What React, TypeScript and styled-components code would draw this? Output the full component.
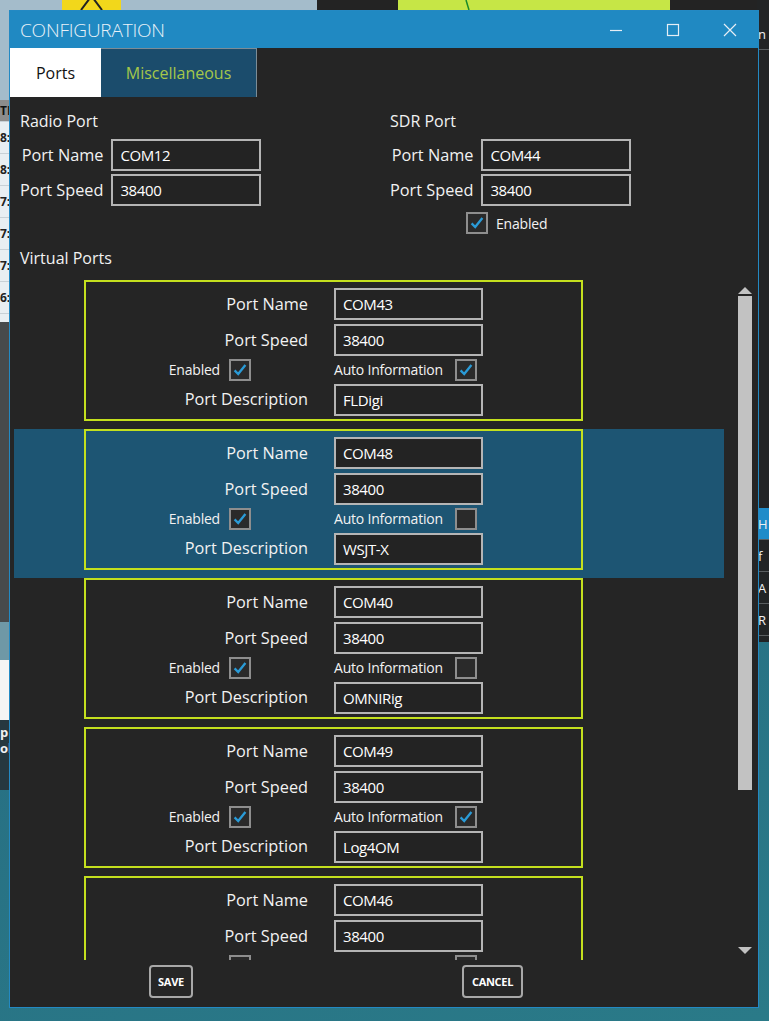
import styled, { createGlobalStyle } from "styled-components";

type VirtualPort = {
  name: string;
  speed: string;
  enabled: boolean;
  autoInfo: boolean;
  description: string;
};

const virtualPorts: VirtualPort[] = [
  { name: "COM43", speed: "38400", enabled: true, autoInfo: true, description: "FLDigi" },
  { name: "COM48", speed: "38400", enabled: true, autoInfo: false, description: "WSJT-X" },
  { name: "COM40", speed: "38400", enabled: true, autoInfo: false, description: "OMNIRig" },
  { name: "COM49", speed: "38400", enabled: true, autoInfo: true, description: "Log4OM" },
  { name: "COM46", speed: "38400", enabled: true, autoInfo: false, description: "" },
];

const GlobalStyle = createGlobalStyle`
  html, body {
    margin: 0;
    padding: 0;
    background: #1d6479;
  }
  * {
    box-sizing: border-box;
  }
`;

const Check = ({ checked }: { checked: boolean }) => (
  <CheckBox>
    {checked && (
      <svg width="20" height="20" viewBox="0 0 20 20">
        <path d="M4 10.5 L8 14.5 L16 4.5" fill="none" stroke="#2a9bd7" strokeWidth="2.6" />
      </svg>
    )}
  </CheckBox>
);

const PortCard = ({ port }: { port: VirtualPort }) => (
  <Card>
    <Label>Port Name</Label>
    <TextBox>{port.name}</TextBox>
    <Label>Port Speed</Label>
    <TextBox>{port.speed}</TextBox>
    <EnabledCell>
      <SmallText>Enabled</SmallText>
      <Check checked={port.enabled} />
    </EnabledCell>
    <AutoCell>
      <SmallText>Auto Information</SmallText>
      <Check checked={port.autoInfo} />
    </AutoCell>
    <Label>Port Description</Label>
    <TextBox>{port.description}</TextBox>
  </Card>
);

export default function App() {
  return (
    <Desktop>
      <GlobalStyle />
      <TopLeftApp>
        <WarnTile>
          <svg width="59" height="10" viewBox="0 0 59 10">
            <path d="M19 10 L29.5 -4 L40 10" fill="none" stroke="#222" strokeWidth="2" />
          </svg>
        </WarnTile>
      </TopLeftApp>
      <TopDarkApp>
        <TopChart>
          <svg width="272" height="10" viewBox="0 0 272 10">
            <path d="M68 0 L71 10" stroke="#1a8a2a" strokeWidth="1.5" />
          </svg>
        </TopChart>
      </TopDarkApp>
      <LeftApp>
        <LeftList>
          <span>TI</span>
          <span>8:</span>
          <span>8:</span>
          <span>7:</span>
          <span>7:</span>
          <span>7:</span>
          <span>6:</span>
        </LeftList>
        <LeftDark />
        <LeftLight />
        <LeftLogo />
        <LeftText>
          <span>p</span>
          <span>ol</span>
        </LeftText>
      </LeftApp>
      <RightApp>
        <RightCell>n</RightCell>
        <RightGap />
        <RightBlue>H</RightBlue>
        <RightCell>f</RightCell>
        <RightCell>A</RightCell>
        <RightCell>R</RightCell>
      </RightApp>

      <Window>
        <TitleBar>
          <Title>CONFIGURATION</Title>
          <Controls>
            <ControlButton>
              <svg width="14" height="14" viewBox="0 0 14 14">
                <path d="M1 7.5 H13" stroke="#e6eef5" strokeWidth="1.2" />
              </svg>
            </ControlButton>
            <ControlButton>
              <svg width="14" height="14" viewBox="0 0 14 14">
                <rect x="1.5" y="1.5" width="11" height="11" fill="none" stroke="#e6eef5" strokeWidth="1.2" />
              </svg>
            </ControlButton>
            <ControlButton>
              <svg width="14" height="14" viewBox="0 0 14 14">
                <path d="M1 1 L13 13 M13 1 L1 13" stroke="#e6eef5" strokeWidth="1.2" />
              </svg>
            </ControlButton>
          </Controls>
        </TitleBar>

        <TabStrip>
          <Tab $active>Ports</Tab>
          <Tab>Miscellaneous</Tab>
        </TabStrip>

        <Body>
          <TopPorts>
            <PortSection>
              <Heading>Radio Port</Heading>
              <PortForm>
                <Label>Port Name</Label>
                <TextBox>COM12</TextBox>
                <Label>Port Speed</Label>
                <TextBox>38400</TextBox>
              </PortForm>
            </PortSection>
            <PortSection>
              <Heading>SDR Port</Heading>
              <PortForm>
                <Label>Port Name</Label>
                <TextBox>COM44</TextBox>
                <Label>Port Speed</Label>
                <TextBox>38400</TextBox>
              </PortForm>
              <SdrEnabled>
                <Check checked />
                <SmallText>Enabled</SmallText>
              </SdrEnabled>
            </PortSection>
          </TopPorts>

          <VirtualHeading>Virtual Ports</VirtualHeading>

          <ListArea>
            <List>
              {virtualPorts.map((p, i) => (
                <Row key={p.name} $selected={i === 1}>
                  <PortCard port={p} />
                </Row>
              ))}
            </List>
            <ScrollBar>
              <ArrowUp />
              <Thumb />
              <ArrowDown />
            </ScrollBar>
          </ListArea>

          <Footer>
            <FooterButton>SAVE</FooterButton>
            <FooterButton $cancel>CANCEL</FooterButton>
          </Footer>
        </Body>
      </Window>
    </Desktop>
  );
}

const font = `"Open Sans", "Noto Sans", "DejaVu Sans", sans-serif`;

const Desktop = styled.div`
  position: relative;
  width: 769px;
  height: 1021px;
  overflow: hidden;
  background: linear-gradient(160deg, #1e5f77 0%, #276f83 50%, #2a7a88 100%);
  font-family: ${font};
`;

const TopLeftApp = styled.div`
  position: absolute;
  left: 0;
  top: 0;
  width: 317px;
  height: 20px;
  background: #a4bccb;
`;

const WarnTile = styled.div`
  position: absolute;
  left: 62px;
  top: 0;
  width: 59px;
  height: 10px;
  background: #f2d71b;
  svg {
    display: block;
  }
`;

const TopDarkApp = styled.div`
  position: absolute;
  left: 317px;
  top: 0;
  right: 0;
  height: 20px;
  background: #232323;
`;

const TopChart = styled.div`
  position: absolute;
  left: 81px;
  top: 0;
  width: 272px;
  height: 20px;
  background: #c6e646;
  svg {
    display: block;
  }
`;

const LeftApp = styled.div`
  position: absolute;
  left: 0;
  top: 0;
  width: 12px;
  height: 790px;
  display: flex;
  flex-direction: column;
  padding-top: 100px;
  background: #a4bccb;
`;

const LeftList = styled.div`
  display: flex;
  flex-direction: column;
  height: 222px;
  background: #e8eef2;
  color: #222;
  font: bold 12px ${font};
  span {
    height: 32px;
    line-height: 32px;
    border-bottom: 1px solid #c7d0d6;
  }
  span:first-child {
    height: 22px;
    line-height: 22px;
    background: #8c8c8c;
    color: #111;
  }
`;

const LeftDark = styled.div`
  height: 300px;
  background: #474a4c;
`;

const LeftLight = styled.div`
  height: 38px;
  background: #6f98a6;
`;

const LeftLogo = styled.div`
  height: 60px;
  background: #f4f4f4;
  border-right: 2px solid #111;
`;

const LeftText = styled.div`
  display: flex;
  flex-direction: column;
  height: 70px;
  background: #26383f;
  color: #f0f0f0;
  font: bold 13px ${font};
  line-height: 16px;
  padding-top: 4px;
`;

const RightApp = styled.div`
  position: absolute;
  right: 0;
  top: 0;
  width: 12px;
  height: 642px;
  display: flex;
  flex-direction: column;
  padding-top: 18px;
  background: #222425;
  color: #f0f0f0;
  font: 13px ${font};
`;

const RightCell = styled.div`
  height: 32px;
  line-height: 32px;
  padding-left: 1px;
  border-bottom: 1px solid #5a5e60;
  white-space: nowrap;
  overflow: hidden;
`;

const RightGap = styled.div`
  height: 458px;
  border-left: 1px solid #2a8cc4;
`;

const RightBlue = styled(RightCell)`
  background: #1f8cc9;
`;

const Window = styled.div`
  position: absolute;
  left: 9px;
  top: 10px;
  width: 750px;
  height: 998px;
  border: 1px solid #2389c3;
  background: #252525;
  display: flex;
  flex-direction: column;
`;

const TitleBar = styled.div`
  height: 37px;
  display: flex;
  align-items: center;
  background: #2089c2;
  padding-left: 10px;
`;

const Title = styled.div`
  flex: 1;
  color: #e9f1f8;
  font: 300 19px ${font};
  letter-spacing: -0.2px;
`;

const Controls = styled.div`
  display: flex;
  height: 100%;
`;

const ControlButton = styled.div`
  width: 57px;
  height: 100%;
  display: flex;
  align-items: center;
  justify-content: center;
`;

const TabStrip = styled.div`
  height: 50px;
  display: flex;
  background: #252525;
`;

const Tab = styled.div<{ $active?: boolean }>`
  display: flex;
  align-items: center;
  justify-content: center;
  font: 16px ${font};
  width: ${(p) => (p.$active ? "91px" : "156px")};
  background: ${(p) => (p.$active ? "#ffffff" : "#1b4c6c")};
  color: ${(p) => (p.$active ? "#111111" : "#a5c74a")};
  border-top: ${(p) => (p.$active ? "none" : "1px solid #7c8c96")};
  border-right: ${(p) => (p.$active ? "none" : "1px solid #7c8c96")};
  margin-bottom: 1px;
`;

const Body = styled.div`
  flex: 1;
  display: flex;
  flex-direction: column;
  color: #f2f2f2;
`;

const TopPorts = styled.div`
  display: grid;
  grid-template-columns: 370px 1fr;
  padding-left: 10px;
`;

const PortSection = styled.div`
  display: flex;
  flex-direction: column;
`;

const Heading = styled.div`
  margin-top: 12px;
  height: 20px;
  line-height: 20px;
  font: 16px ${font};
`;

const PortForm = styled.div`
  display: grid;
  grid-template-columns: auto 150px;
  grid-auto-rows: 32px;
  column-gap: 8px;
  row-gap: 3px;
  margin-top: 9px;
  width: max-content;
`;

const Label = styled.div`
  display: flex;
  align-items: center;
  justify-content: flex-end;
  font: 16.3px ${font};
  white-space: nowrap;
`;

const TextBox = styled.div`
  display: flex;
  align-items: center;
  height: 32px;
  padding-left: 7px;
  border: 2px solid #b5b5b5;
  background: #232323;
  color: #ffffff;
  font: 15px ${font};
  letter-spacing: -0.4px;
`;

const SdrEnabled = styled.div`
  display: flex;
  align-items: center;
  gap: 8px;
  margin-top: 6px;
  margin-left: 76px;
  height: 22px;
`;

const CheckBox = styled.span`
  display: inline-flex;
  align-items: center;
  justify-content: center;
  width: 22px;
  height: 22px;
  flex: none;
  border: 2px solid #8e8e8e;
  background: #2a2a2a;
`;

const SmallText = styled.span`
  font: 14px ${font};
  letter-spacing: -0.2px;
  white-space: nowrap;
`;

const VirtualHeading = styled(Heading)`
  margin-top: 13px;
  padding-left: 10px;
`;

const ListArea = styled.div`
  display: flex;
  height: 688px;
  margin-top: 5px;
  padding-left: 4px;
`;

const List = styled.div`
  width: 710px;
  height: 100%;
  overflow: hidden;
  padding-top: 8px;
`;

const Row = styled.div<{ $selected?: boolean }>`
  padding: 0 0 8px 70px;
  background: ${(p) => (p.$selected ? "#1d5573" : "transparent")};
`;

const Card = styled.div`
  width: 499px;
  height: 141px;
  border: 2px solid #c4e01e;
  display: grid;
  grid-template-columns: 222px 149px;
  grid-template-rows: 32px 32px 21px 31px;
  column-gap: 26px;
  row-gap: 3.5px;
  padding-top: 6px;
`;

const EnabledCell = styled.div`
  display: flex;
  align-items: center;
  justify-content: flex-end;
  gap: 9px;
  padding-right: 57px;
`;

const AutoCell = styled.div`
  display: flex;
  align-items: center;
  justify-content: space-between;
  padding-right: 6px;
`;

const ScrollBar = styled.div`
  width: 15px;
  margin-left: 13px;
  height: 100%;
  display: flex;
  flex-direction: column;
  align-items: center;
`;

const ArrowUp = styled.div`
  margin-top: 15px;
  width: 0;
  height: 0;
  border-left: 7px solid transparent;
  border-right: 7px solid transparent;
  border-bottom: 7px solid #c2c2c2;
`;

const Thumb = styled.div`
  margin-top: 2px;
  width: 14px;
  height: 494px;
  background: #c2c2c2;
`;

const ArrowDown = styled.div`
  margin-top: 157px;
  width: 0;
  height: 0;
  border-left: 7px solid transparent;
  border-right: 7px solid transparent;
  border-top: 7px solid #c2c2c2;
`;

const Footer = styled.div`
  display: flex;
  align-items: flex-start;
  padding: 5px 0 0 139px;
  gap: 269px;
  flex: 1;
`;

const FooterButton = styled.div<{ $cancel?: boolean }>`
  height: 33px;
  width: ${(p) => (p.$cancel ? "61px" : "44px")};
  display: flex;
  align-items: center;
  justify-content: center;
  border: 2px solid #a8a8a8;
  border-radius: 4px;
  background: #262626;
  color: #ffffff;
  font: bold 11px ${font};
  letter-spacing: -0.3px;
`;
